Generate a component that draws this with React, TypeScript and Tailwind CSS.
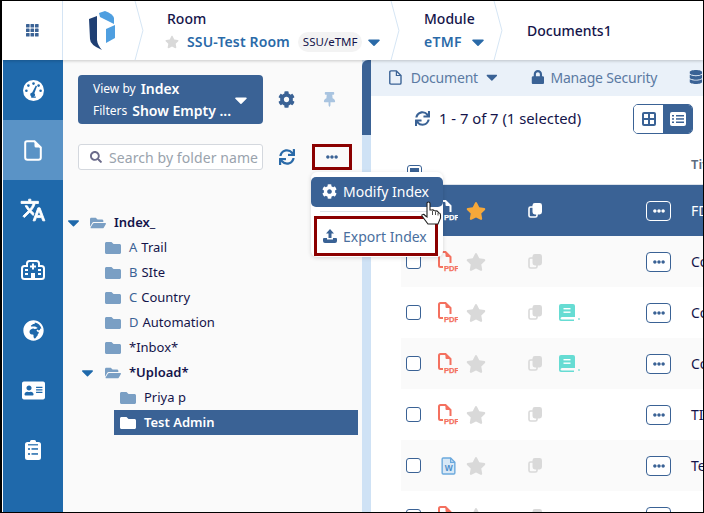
import React from "react";
import { FaCaretDown, FaCog, FaStar, FaFolder, FaFolderOpen, FaSync, FaLock, FaDatabase, FaSearch, FaAddressCard, FaGlobeAfrica, FaThumbtack, FaEllipsisH } from "react-icons/fa";

function Crumb({ children, w }: { children: React.ReactNode; w: string }) {
  return (
    <div className={`relative flex h-full shrink-0 flex-col justify-center ${w}`}>
      {children}
      <svg className="absolute right-0 top-0 h-full w-[10px]" viewBox="0 0 10 60" fill="none">
        <path d="M1 0 L9 30 L1 60" stroke="#d4e4f4" strokeWidth="1" />
      </svg>
    </div>
  );
}

function FolderRow({ label, prefix, open, bold, indent, caret, selected }: { label: string; prefix?: string; open?: boolean; bold?: boolean; indent: string; caret?: string; selected?: boolean }) {
  const Icon = open ? FaFolderOpen : FaFolder;
  return (
    <div className={`relative flex h-[25px] items-center ${indent} ${selected ? "mr-1 bg-[#3a6295] text-white" : "text-[#14144a]"}`}>
      {caret && <FaCaretDown className={`absolute ${caret} text-[19px] text-[#1f69ab]`} />}
      <Icon className={`mr-2 text-[16px] ${selected ? "text-white" : "text-[#7a9fc4]"}`} />
      {prefix && <span className="mr-1 text-[#3a6295]">{prefix}</span>}
      <span className={bold ? "font-semibold" : ""}>{label}</span>
    </div>
  );
}

function PdfIcon({ white }: { white?: boolean }) {
  const c = white ? "#ffffff" : "#f4705f";
  return (
    <svg width="20" height="21" viewBox="0 0 20 21" fill="none">
      <path d="M5 16 H2.5 Q1 16 1 14.5 V2.5 Q1 1 2.5 1 H7.5 L12.5 6 V12" stroke={c} strokeWidth="2" />
      <path d="M7.5 1.5 V5 Q7.5 6 8.5 6 H12 Z" fill={c} />
      <text x="6" y="20" fontSize="7.6" fontWeight="700" fill={c} stroke={c} strokeWidth="0.25" fontFamily="Liberation Sans">PDF</text>
    </svg>
  );
}

function WordIcon() {
  return (
    <svg width="15" height="18" viewBox="0 0 14 17" fill="none">
      <path d="M1 2 Q1 1 2 1 H9 L13 5 V15 Q13 16 12 16 H2 Q1 16 1 15 Z" fill="#d8e8f6" stroke="#6ba9dd" strokeWidth="1.3" />
      <path d="M9 1 V5 H13" stroke="#6ba9dd" strokeWidth="1.2" />
      <text x="3.4" y="13.5" fontSize="8" fontWeight="700" fill="#4c8ecb" fontFamily="Liberation Sans">W</text>
    </svg>
  );
}

function BookIcon() {
  return (
    <div className="flex items-end">
      <svg width="16" height="17" viewBox="0 0 16 17">
        <path d="M2 0 H14 Q16 0 16 2 V13 H3 Q1.5 13 1.5 14.5 Q1.5 15.5 3 15.5 H15 V17 H2 Q0 17 0 15 V2 Q0 0 2 0 Z" fill="#66dcd3" />
        <rect x="4.5" y="4" width="7" height="1.4" fill="#fff" />
        <rect x="4.5" y="7.5" width="7" height="1.4" fill="#fff" />
      </svg>
      <span className="ml-[3px] mb-[1px] h-[2px] w-[2px] bg-[#a6e8e2]" />
    </div>
  );
}

function CopyIcon({ white }: { white?: boolean }) {
  const c = white ? "#ffffff" : "#d9d9d9";
  return (
    <svg width="14" height="15" viewBox="0 0 14 15" className="shrink-0" fill="none">
      <rect x="1" y="4" width="8" height="10" rx="1.6" stroke={c} strokeWidth="1.6" />
      <rect x="4.5" y="0" width="9.5" height="11.5" rx="2.4" fill={c} />
    </svg>
  );
}

function Row({ title, icon, book, selected, alt }: { title: string; icon: React.ReactNode; book?: boolean; selected?: boolean; alt?: boolean }) {
  return (
    <div className={`flex h-[51px] shrink-0 items-center pl-[5px] ${selected ? "bg-[#3a6295] text-white" : alt ? "bg-[#fafafa] text-[#14144a]" : "bg-white text-[#14144a]"}`}>
      <div className={`h-[15px] w-[15px] shrink-0 rounded-[3px] border border-[#3a6295] ${selected ? "opacity-0" : "bg-white"}`} />
      <div className="ml-[17px] flex w-[20px] shrink-0 justify-center">{icon}</div>
      <FaStar className={`ml-[8px] shrink-0 text-[20px] ${selected ? "text-[#f5a83a]" : "text-[#d9d9d9]"}`} />
      <div className="ml-[42px] shrink-0"><CopyIcon white={selected} /></div>
      <div className="ml-[17px] w-[24px] shrink-0">{book && <BookIcon />}</div>
      <div className={`ml-[63px] flex h-[20px] w-[25px] shrink-0 items-center justify-center rounded-[4px] border-[1.5px] ${selected ? "border-white" : "border-[#3a6295] bg-white"}`}>
        <FaEllipsisH className={`text-[12px] ${selected ? "text-white" : "text-[#3a6295]"}`} />
      </div>
      <span className="ml-[20px] whitespace-nowrap text-[14px]">{title}</span>
    </div>
  );
}

function GaugeIcon() {
  return (
    <svg width="21" height="21" viewBox="0 0 21 21">
      <circle cx="10.5" cy="10.5" r="10.5" fill="#fff" />
      <g fill="#1f69ab">
        <circle cx="10.5" cy="3.6" r="1.3" /><circle cx="5.4" cy="5.6" r="1.3" /><circle cx="3.4" cy="10.8" r="1.3" />
        <circle cx="15.6" cy="5.6" r="1.3" /><circle cx="17.6" cy="10.8" r="1.3" />
        <path d="M12.8 5.6 L14 6.2 L11.4 13.2 A2.3 2.3 0 1 1 9.2 12.4 Z" />
        <rect x="8" y="16.4" width="5" height="1.4" rx="0.7" />
      </g>
    </svg>
  );
}

function FileIcon() {
  return (
    <svg width="18" height="21" viewBox="0 0 18 21" fill="none">
      <path d="M3 1.2 H10.5 L16.8 7.5 V17.5 Q16.8 19.8 14.5 19.8 H3.5 Q1.2 19.8 1.2 17.5 V3 Q1.2 1.2 3 1.2 Z" stroke="#fff" strokeWidth="2" />
      <path d="M10.5 1.5 L16.5 7.5 H12 Q10.5 7.5 10.5 6 Z" fill="#fff" />
    </svg>
  );
}

function TranslateIcon() {
  return (
    <svg width="26" height="26" viewBox="0 0 24 24" fill="#fff" stroke="#fff" strokeWidth="0.8">
      <path d="m12.87 15.07-2.54-2.51.03-.03c1.74-1.94 2.98-4.17 3.71-6.53H17V4h-7V2H8v2H1v1.99h11.17C11.5 7.92 10.4 9.75 9 11.3 8.1 10.3 7.35 9.21 6.75 8.07h-2c.73 1.63 1.73 3.17 2.98 4.56l-5.09 5.02L4 19l5-5 3.11 3.11.76-2.04zM18.5 10h-2L12 22h2l1.12-3h4.75L21 22h2l-4.5-12zm-2.62 7 1.62-4.33L19.12 17h-3.24z" />
    </svg>
  );
}

function HospitalIcon() {
  return (
    <svg width="24" height="20" viewBox="0 0 24 20" fill="none">
      <path d="M6 6 V3.5 Q6 1 8.5 1 H15.5 Q18 1 18 3.5 V6 H20.5 Q23 6 23 8.5 V16.5 Q23 19 20.5 19 H3.5 Q1 19 1 16.5 V8.5 Q1 6 3.5 6 Z" stroke="#fff" strokeWidth="2" />
      <path d="M11 3.5 H13 V5.5 H15 V7.5 H13 V9.5 H11 V7.5 H9 V5.5 H11 Z" fill="#fff" />
      <rect x="10" y="13" width="4" height="6" fill="#fff" />
      <rect x="4" y="9" width="3" height="2" fill="#fff" /><rect x="4" y="13" width="3" height="2" fill="#fff" />
      <rect x="17" y="9" width="3" height="2" fill="#fff" /><rect x="17" y="13" width="3" height="2" fill="#fff" />
    </svg>
  );
}

function ClipboardIcon() {
  return (
    <svg width="16" height="20" viewBox="0 0 16 20">
      <path d="M5 1.5 Q5 0 6.5 0 H9.5 Q11 0 11 1.5 V2 H13.5 Q16 2 16 4.5 V17.5 Q16 20 13.5 20 H2.5 Q0 20 0 17.5 V4.5 Q0 2 2.5 2 H5 Z" fill="#fff" />
      <g fill="#1f69ab">
        <rect x="3" y="4.2" width="10" height="1.2" />
        <circle cx="4" cy="9" r="1.1" /><rect x="6.5" y="8.2" width="6.5" height="1.5" />
        <circle cx="4" cy="14" r="1.1" /><rect x="6.5" y="13.2" width="6.5" height="1.5" />
      </g>
    </svg>
  );
}

export default function App() {
  const nav = [
    <GaugeIcon key="g" />,
    <FileIcon key="f" />,
    <TranslateIcon key="t" />,
    <HospitalIcon key="h" />,
    <FaGlobeAfrica key="w" className="text-[21px] text-white" />,
    <FaAddressCard key="a" className="text-[23px] text-white" />,
    <ClipboardIcon key="c" />,
  ];
  return (
    <div className="h-[513px] w-[704px] overflow-hidden bg-black pb-[1px] pl-[2px] pr-[1px] pt-[1px] text-[14px]" style={{ fontFamily: '"Noto Sans", sans-serif' }}>
      <div className="flex h-full w-full flex-col overflow-hidden bg-white">
        <header className="z-10 flex h-[59px] shrink-0 items-stretch bg-white shadow-[0_1px_3px_rgba(0,0,0,0.2)]">
          <div className="flex w-[61px] shrink-0 items-center justify-center border-r border-[#d4e4f4]">
            <svg width="13" height="13" viewBox="0 0 13 13" fill="#3a6295">
              {[0, 4.5, 9].flatMap((x) => [0, 4.5, 9].map((y) => <rect key={`${x}-${y}`} x={x} y={y} width="3.6" height="3.6" rx="0.6" />))}
            </svg>
          </div>
          <Crumb w="w-[81px] pl-[26px]">
            <svg width="26" height="40" viewBox="0 0 26 40">
              <path d="M0 8 L8 5 V29 Q8.5 34 13 39 Q1 34 1 28 Z" fill="#1f3f73" />
              <path d="M10 2 L16 0 Q24 3 25 7 V13 L11 6 Z" fill="#4f9fe0" />
              <path d="M17 18 L26 14 V27 L17 32 Z" fill="#4f9fe0" />
            </svg>
          </Crumb>
          <Crumb w="w-[256px] pl-[23px]">
            <div className="text-[14px] font-medium leading-[20px] text-[#14144a]">Room</div>
            <div className="mt-[3px] flex items-center whitespace-nowrap leading-[20px]">
              <FaStar className="-ml-[2px] mr-[8px] text-[14px] text-[#d9d9d9]" />
              <span className="text-[14px] font-semibold tracking-[0.15px] text-[#2a6aa8]">SSU-Test Room</span>
              <span className="ml-[8px] rounded-full bg-[#f3f3f3] px-[5px] text-[11.5px] text-[#14144a]">SSU/eTMF</span>
              <FaCaretDown className="ml-[2px] text-[20px] text-[#2a6aa8]" />
            </div>
          </Crumb>
          <Crumb w="w-[103px] pl-[24px]">
            <div className="text-[14px] font-medium leading-[20px] text-[#14144a]">Module</div>
            <div className="mt-[3px] flex items-center leading-[20px]">
              <span className="font-semibold tracking-[0.3px] text-[#2a6aa8]">eTMF</span>
              <FaCaretDown className="ml-[6px] text-[20px] text-[#2a6aa8]" />
            </div>
          </Crumb>
          <div className="flex items-center pb-[1px] pl-[24px] text-[14px] font-medium text-[#14144a]">Documents1</div>
        </header>

        <div className="flex min-h-0 flex-1">
          <nav className="ml-[1px] flex w-[60px] shrink-0 flex-col bg-[#1f69ab]">
            {nav.map((icon, i) => (
              <div key={i} className={`flex h-[60px] shrink-0 items-center justify-center ${i === 1 ? "bg-[#5a93c6]" : ""}`}>
                {icon}
              </div>
            ))}
          </nav>

          <aside className="relative flex w-[299px] shrink-0 flex-col bg-[#fafafa] pl-[15px] pt-[15px]">
            <div className="flex items-center">
              <div className="flex h-[49px] w-[185px] items-center justify-between rounded-[4px] bg-[#3a6295] pl-[15px] pr-[12px] text-white">
                <div className="flex flex-col leading-[22px]">
                  <div className="flex items-center whitespace-nowrap"><span className="mr-[5px] text-[12px]">View by</span><span className="text-[14px] font-semibold">Index</span></div>
                  <div className="flex items-center whitespace-nowrap"><span className="mr-[5px] text-[12px]">Filters</span><span className="text-[14px] font-semibold">Show Empty ...</span></div>
                </div>
                <FaCaretDown className="text-[20px]" />
              </div>
              <FaCog className="ml-[15px] text-[17px] text-[#3a6295]" />
              <FaThumbtack className="ml-[27px] text-[15px] text-[#a9c4e0]" />
            </div>
            <div className="mt-[20px] flex items-center">
              <div className="flex h-[26px] w-[185px] items-center rounded-[3px] border border-[#d4d8de] bg-white pl-[11px] text-[#9aa3ad]">
                <FaSearch className="mr-[7px] text-[12px] text-[#6b6b8a]" />
                <span className="whitespace-nowrap text-[14px] tracking-[0.08px]">Search by folder name</span>
              </div>
              <FaSync className="ml-[16px] text-[16px] text-[#2a6aa8]" />
              <div className="ml-[17px] flex h-[26px] w-[40px] items-center justify-center border-[3px] border-[#8b0000]">
                <FaEllipsisH className="text-[12px] text-[#3a6295]" />
              </div>
            </div>
            <div className="mt-[40px] text-[13px]">
              <FolderRow label="Index_" open bold indent="pl-[12px]" caret="left-[-14px]" />
              <FolderRow label="Trail" prefix="A" indent="pl-[27px]" />
              <FolderRow label="SIte" prefix="B" indent="pl-[27px]" />
              <FolderRow label="Country" prefix="C" indent="pl-[27px]" />
              <FolderRow label="Automation" prefix="D" indent="pl-[27px]" />
              <FolderRow label="*Inbox*" indent="pl-[27px]" />
              <FolderRow label="*Upload*" open bold indent="pl-[27px]" caret="left-0" />
              <FolderRow label="Priya p" indent="pl-[42px]" />
              <div className="ml-[36px]"><FolderRow label="Test Admin" bold selected indent="pl-[6px]" /></div>
            </div>

            <div className="absolute left-[248px] top-[112px] z-20 w-[132px] rounded-[6px] bg-white pt-[5px] shadow-[0_1px_4px_rgba(0,0,0,0.15)]">
              <div className="flex h-[30px] items-center rounded-[5px] bg-[#3a6295] pb-[2px] pl-[11px] text-white">
                <FaCog className="mr-[6px] text-[15px]" />
                <span className="text-[14px]">Modify Index</span>
              </div>
              <div className="mx-[9px] mt-[4px] h-px bg-[#dfe3e8]" />
              <div className="mb-px ml-[3px] mr-[5px] mt-[4px] flex h-[40px] items-center border-[3px] border-[#8b0000] bg-white pl-[6px] text-[#4a6f9e]">
                <svg width="14" height="14" viewBox="0 0 14 14" fill="#3a6295" className="mr-[6px]"><path d="M7 0 L11 4.5 H8.5 V9 H5.5 V4.5 H3 Z" /><path d="M0 10 Q0 9 1 9 H4 V10.5 H10 V9 H13 Q14 9 14 10 V12 Q14 14 12 14 H2 Q0 14 0 12 Z" /></svg>
                <span className="text-[14px]">Export Index</span>
              </div>
            </div>
            <svg width="21" height="25" viewBox="0 0 21 25" className="absolute left-[358px] top-[141px] z-30">
              <path d="M6 2 Q6 1 7.5 1 Q9 1 9 2.5 V9 L11 9 Q12 8.5 13 9.5 L15 10 Q16 9.5 17 11 L18 12 Q19.5 12 19.5 14 V17 L17 23 H7 L1 15 Q0.5 13.5 2 13.5 Q3 13 4 14.5 L6 16 Z" fill="#fff" stroke="#222" strokeWidth="1.1" />
              <path d="M11.5 10 V14 M14.5 10.5 V14 M17 12 V14.5" stroke="#222" strokeWidth="0.8" />
            </svg>
          </aside>

          <div className="flex w-[9px] shrink-0 flex-col bg-[#cfe2f5]">
            <div className="h-[75px] rounded-tl-[6px] bg-[#3a6295]" />
          </div>

          <main className="flex min-w-0 flex-1 flex-col overflow-hidden bg-white">
            <div className="flex h-[36px] shrink-0 items-center whitespace-nowrap bg-[#eaf1f9] pb-[2px] pl-[18px] text-[#5b7aa3]">
              <svg width="13" height="15" viewBox="0 0 13 15" fill="none" className="mr-[9px]"><path d="M2 0.8 H7.5 L12.2 5.5 V13 Q12.2 14.2 11 14.2 H2 Q0.8 14.2 0.8 13 V2 Q0.8 0.8 2 0.8 Z" stroke="#3a6295" strokeWidth="1.4" /><path d="M7.5 1 V5.5 H12" stroke="#3a6295" strokeWidth="1.2" /></svg>
              <span className="tracking-[-0.2px]">Document</span>
              <FaCaretDown className="ml-[5px] text-[18px] text-[#3a6295]" />
              <FaLock className="ml-[30px] mr-[6px] text-[14px] text-[#3a6295]" />
              <span className="tracking-[-0.2px]">Manage Security</span>
              <FaDatabase className="ml-[32px] text-[14px] text-[#3a6295]" />
            </div>
            <div className="flex h-[45px] shrink-0 items-center pl-[44px] text-[#14144a]">
              <FaSync className="mr-[9px] text-[15px] text-[#3a6295]" />
              <span className="whitespace-nowrap text-[14.8px]">1 - 7 of 7 (1 selected)</span>
              <div className="ml-[52px] flex h-[30px] w-[60px] shrink-0 overflow-hidden rounded-[5px] border border-[#3a6295]">
                <div className="flex flex-1 items-center justify-center bg-white">
                  <svg width="14" height="14" viewBox="0 0 14 14"><rect width="14" height="14" rx="2" fill="#3a6295" /><rect x="2" y="2" width="4" height="4" fill="#fff" /><rect x="8" y="2" width="4" height="4" fill="#fff" /><rect x="2" y="8" width="4" height="4" fill="#fff" /><rect x="8" y="8" width="4" height="4" fill="#fff" /></svg>
                </div>
                <div className="flex flex-1 items-center justify-center bg-[#3a6295]">
                  <svg width="16" height="14" viewBox="0 0 16 14"><rect width="16" height="14" rx="2" fill="#fff" /><g fill="#3a6295"><rect x="2" y="3" width="2" height="1.5" /><rect x="2" y="6.2" width="2" height="1.5" /><rect x="2" y="9.5" width="2" height="1.5" /><rect x="6" y="3" width="8" height="1.5" /><rect x="6" y="6.2" width="8" height="1.5" /><rect x="6" y="9.5" width="8" height="1.5" /></g></svg>
                </div>
              </div>
            </div>
            <div className="flex h-[44px] shrink-0 items-center border-b border-[#dde3ea] pl-[36px]">
              <div className="mb-[4px] flex h-[15px] w-[15px] shrink-0 items-center justify-center self-end rounded-[3px] border border-[#3a6295] bg-white"><div className="h-[9px] w-[9px] bg-[#3a6295]" /></div>
              <span className="ml-[269px] pt-[4px] text-[13px] font-semibold text-[#5b6b80]">Title</span>
            </div>
            <div className="ml-[30px] flex flex-col">
              <Row selected title="FD" icon={<PdfIcon white />} />
              <Row alt title="Co" icon={<PdfIcon />} />
              <Row title="Co" book icon={<PdfIcon />} />
              <Row alt title="Co" book icon={<PdfIcon />} />
              <Row title="TI" icon={<PdfIcon />} />
              <Row alt title="Te" icon={<WordIcon />} />
              <Row title="Co" icon={<PdfIcon />} />
            </div>
          </main>
        </div>
      </div>
    </div>
  );
}
